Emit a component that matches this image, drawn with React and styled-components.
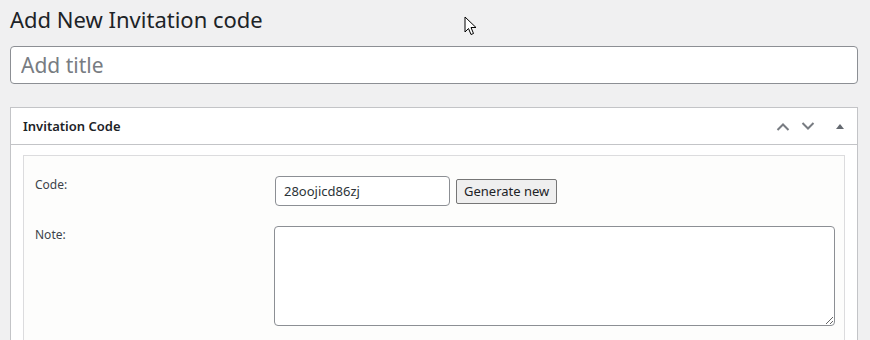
import React from 'react'
import styled, { createGlobalStyle } from 'styled-components'

const Global = createGlobalStyle`
  html, body {
    margin: 0;
    padding: 0;
    background: #f0f0f1;
    font-family: "Noto Sans", "Open Sans", sans-serif;
    color: #3c434a;
    font-size: 13px;
  }
`

const Wrap = styled.div`
  position: relative;
  padding: 3px 12px 0 10px;
  height: 340px;
  overflow: hidden;
  box-sizing: border-box;
`

const Heading = styled.h1`
  margin: 0;
  font-size: 22px;
  font-weight: 400;
  line-height: 32px;
  color: #1d2327;
`

const TitleInput = styled.input`
  display: block;
  box-sizing: border-box;
  width: 100%;
  height: 38px;
  margin-top: 11px;
  padding: 3px 10px;
  border: 1px solid #8c8f94;
  border-radius: 4px;
  background: #fff;
  font-family: inherit;
  font-size: 21px;
  color: #2c3338;
  outline: none;
  &::placeholder { color: #787c82; }
`

const Postbox = styled.div`
  margin-top: 23px;
  border: 1px solid #c3c4c7;
  background: #fff;
`

const PostboxHeader = styled.div`
  display: flex;
  align-items: center;
  justify-content: space-between;
  height: 36px;
  padding: 0 12px;
  border-bottom: 1px solid #c3c4c7;
`

const PostboxTitle = styled.h2`
  margin: 0;
  font-size: 13px;
  font-weight: 600;
  color: #1d2327;
`

const Handles = styled.div`
  display: flex;
  align-items: center;
  margin-right: -10px;
`

const HandleButton = styled.span`
  display: flex;
  align-items: center;
  justify-content: center;
  width: ${p => p.$w}px;
  height: 24px;
  color: #787c82;
`

const Inside = styled.div`
  padding: 10px 12px 12px;
`

const InnerBox = styled.div`
  border: 1px solid #dcdcde;
  background: #fdfdfc;
  padding: 10px 10px 20px 11px;
`

const FieldRow = styled.div`
  display: grid;
  grid-template-columns: 240px 1fr;
  padding: 10px 0;
`

const Label = styled.label`
  font-size: 12px;
  line-height: 18px;
  color: #3c434a;
`

const Controls = styled.div`
  display: flex;
  align-items: center;
  gap: 6px;
`

const CodeInput = styled.input`
  box-sizing: border-box;
  width: 175px;
  height: 30px;
  padding: 0 8px;
  border: 1px solid #8c8f94;
  border-radius: 4px;
  background: #fff;
  font-family: inherit;
  font-size: 13px;
  color: #2c3338;
  outline: none;
`

const GenerateButton = styled.button`
  box-sizing: border-box;
  height: 25px;
  padding: 0 7px;
  border: 1px solid #767676;
  border-radius: 2px;
  background: #efefef;
  font-family: inherit;
  font-size: 13px;
  color: #1d2327;
`

const NoteArea = styled.textarea`
  display: block;
  box-sizing: border-box;
  width: 561px;
  height: 100px;
  margin-left: -1px;
  border: 1px solid #8c8f94;
  border-radius: 4px;
  background: #fff;
  font-family: inherit;
  outline: none;
`

const Cursor = styled.svg`
  position: absolute;
  left: 464px;
  top: 16px;
`

const ChevronUp = () => (
  <svg width="14" height="9" viewBox="0 0 14 9">
    <path d="M1.5 8 L7 2.5 L12.5 8" fill="none" stroke="currentColor" strokeWidth="2" />
  </svg>
)

const ChevronDown = () => (
  <svg width="14" height="9" viewBox="0 0 14 9">
    <path d="M1.5 1 L7 6.5 L12.5 1" fill="none" stroke="currentColor" strokeWidth="2" />
  </svg>
)

const Triangle = () => (
  <svg width="8" height="6" viewBox="0 0 8 6">
    <path d="M0 6 L4 1 L8 6 Z" fill="#646970" />
  </svg>
)

export default function App() {
  return (
    <>
      <Global />
      <Wrap>
        <Heading>Add New Invitation code</Heading>
        <TitleInput placeholder="Add title" />
        <Postbox>
          <PostboxHeader>
            <PostboxTitle>Invitation Code</PostboxTitle>
            <Handles>
              <HandleButton $w={16}><ChevronUp /></HandleButton>
              <HandleButton $w={34}><ChevronDown /></HandleButton>
              <HandleButton $w={30}><Triangle /></HandleButton>
            </Handles>
          </PostboxHeader>
          <Inside>
            <InnerBox>
              <FieldRow>
                <Label>Code:</Label>
                <Controls>
                  <CodeInput defaultValue="28oojicd86zj" />
                  <GenerateButton>Generate new</GenerateButton>
                </Controls>
              </FieldRow>
              <FieldRow>
                <Label>Note:</Label>
                <div><NoteArea /></div>
              </FieldRow>
            </InnerBox>
          </Inside>
        </Postbox>
        <Cursor width="13" height="21" viewBox="0 0 13 21">
          <path d="M1 1 L1 16 L4.5 12.5 L7 18.5 L9.5 17.5 L7 11.5 L12 11.5 Z" fill="#fff" stroke="#000" strokeWidth="1" strokeLinejoin="round" />
        </Cursor>
      </Wrap>
    </>
  )
}
